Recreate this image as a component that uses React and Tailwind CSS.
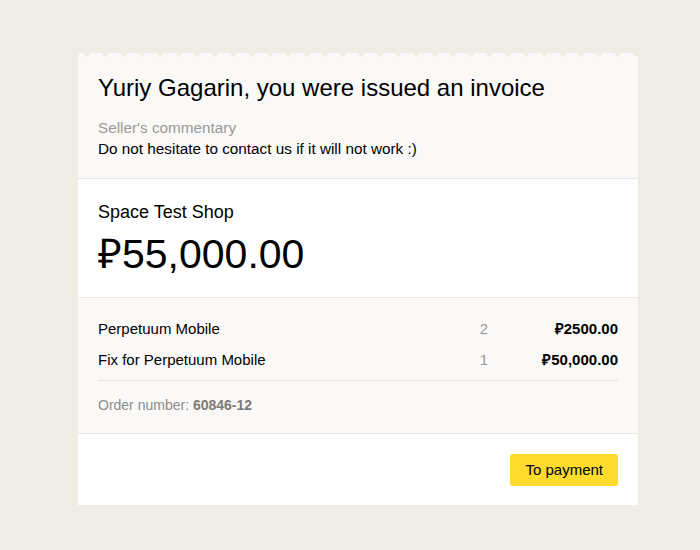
import React from "react";

const items = [
  { name: "Perpetuum Mobile", qty: 2, price: "₽2500.00" },
  { name: "Fix for Perpetuum Mobile", qty: 1, price: "₽50,000.00" },
];

// scalloped top edge of the receipt
const EdgeTop = () => {
  let d = "M0 6 L0 1";
  for (let c = 9; c < 560; c += 18.3) {
    d += ` L${(c - 4).toFixed(1)} 1 C${(c - 3).toFixed(1)} 1 ${(c - 2).toFixed(1)} 4.5 ${c.toFixed(1)} 4.5 C${(c + 2).toFixed(1)} 4.5 ${(c + 3).toFixed(1)} 1 ${(c + 4).toFixed(1)} 1`;
  }
  d += " L560 1 L560 6 Z";
  return (
    <svg width="560" height="6" viewBox="0 0 560 6" className="block">
      <path d={d} fill="#faf9f7" />
    </svg>
  );
};

const App = () => {
  return (
    <div
      className="w-[700px] h-[550px] bg-[#efece6] pt-[52px] pl-[78px] text-black"
      style={{ fontFamily: '"Liberation Sans", Arial, sans-serif' }}
    >
      <div className="w-[560px]">
        <EdgeTop />
        {/* header */}
        <div className="bg-[#faf9f7] px-5 pt-[16px] pb-[19px] border-b border-[#ebe8e3]">
          <h1 className="text-[24px] leading-[28px]">
            Yuriy Gagarin, you were issued an invoice
          </h1>
          <p className="mt-[15px] text-[15.3px] leading-[21px] text-[#999]">
            Seller's commentary
          </p>
          <p className="text-[15.3px] leading-[21px]">
            Do not hesitate to contact us if it will not work :)
          </p>
        </div>

        {/* amount */}
        <div className="bg-white px-5 pt-[21px] pb-[19px] border-b border-[#ebe8e3]">
          <div className="text-[18px] leading-[24px]">Space Test Shop</div>
          <div className="mt-[6px] text-[41px] leading-[48px]">₽55,000.00</div>
        </div>

        {/* items */}
        <div className="bg-[#faf9f7] px-5 pt-[21px] pb-[18px] border-b border-[#ebe8e3]">
          <div className="flex flex-col gap-[11px] pb-[10px] border-b border-[#e6e3de]">
            {items.map((it) => (
              <div key={it.name} className="flex items-center text-[15px] leading-[20px]">
                <span className="flex-1">{it.name}</span>
                <span className="w-[60px] text-right text-[#999]">{it.qty}</span>
                <span className="w-[130px] text-right font-bold">{it.price}</span>
              </div>
            ))}
          </div>
          <div className="mt-[14px] text-[14px] leading-[20px] text-[#8c8c8c]">
            Order number: <span className="font-bold text-[#7a7a7a]">60846-12</span>
          </div>
        </div>

        {/* footer */}
        <div className="bg-white px-5 pt-[20px] pb-[19px] flex justify-end">
          <button className="h-[32px] px-[15px] rounded-[3px] bg-[#ffdb2d] text-[15px] text-black">
            To payment
          </button>
        </div>
      </div>
    </div>
  );
};

export default App;
